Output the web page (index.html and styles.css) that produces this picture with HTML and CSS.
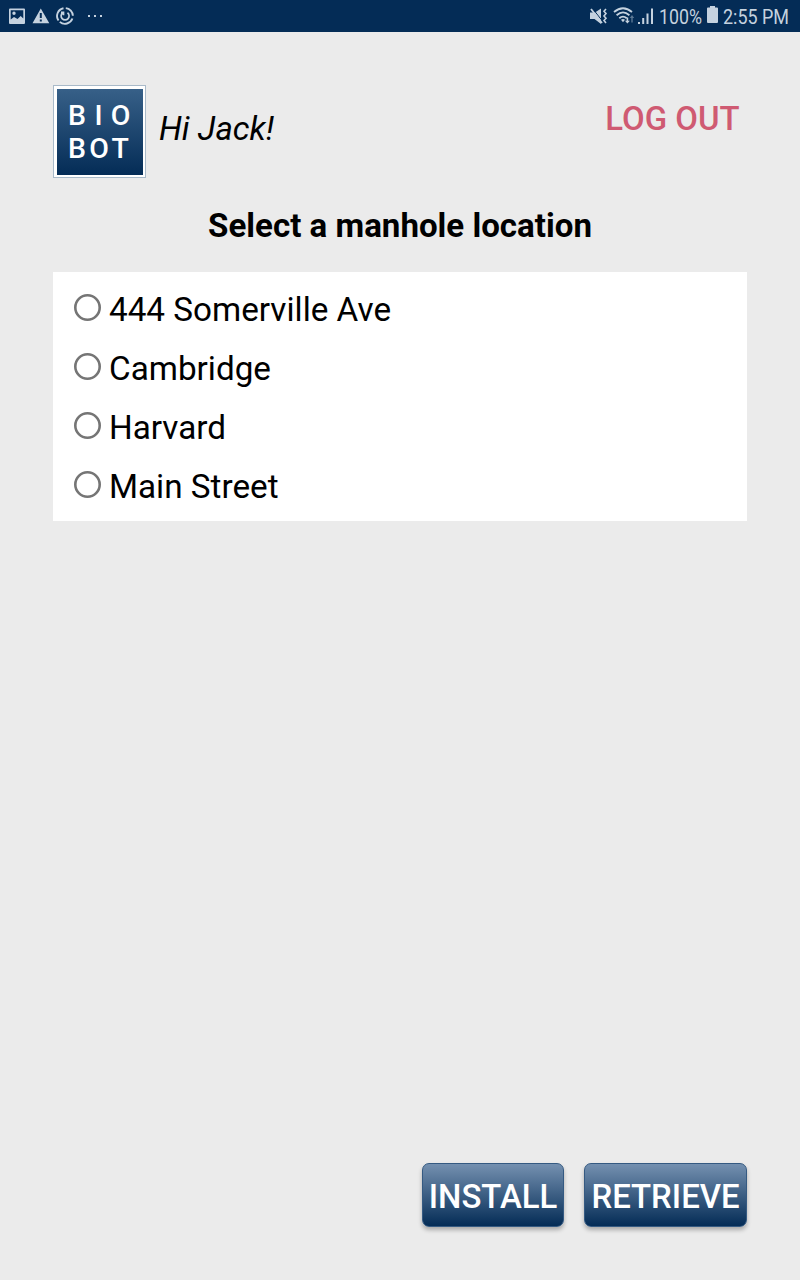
FILE: index.html
```html
<!DOCTYPE html>
<html lang="en">
<head>
<meta charset="utf-8">
<title>Biobot</title>
<link rel="stylesheet" href="styles.css">
</head>
<body>
<div class="screen">
  <div class="status">
    <svg class="status-left" width="120" height="32" viewBox="0 0 120 32">
      <path fill-rule="evenodd" d="M10 8.500h14a1 1 0 0 1 1 1v13.500a1 1 0 0 1-1 1H10a1 1 0 0 1-1-1V9.500a1 1 0 0 1 1-1zM10.700 10.200v9.300l3.300-2.500 3.500 2 3.200-3 2.600 2.500v-8.300zM12.300 13.300a1.700 1.700 0 1 0 3.400 0a1.700 1.700 0 1 0-3.400 0z"/>
      <path fill-rule="evenodd" d="M40.800 8.500L49.300 23.300H32.500zM39.800 13v5h2v-5zM39.800 19.500v2h2v-2z"/>
      <g fill="none" stroke="#c5d2df" stroke-width="1.900">
        <path d="M63.500 8.200A7.900 7.900 0 0 0 58.500 20.500M59.800 21.900A7.900 7.900 0 0 0 72.400 18.500M72.900 15.800A7.900 7.900 0 0 0 65.800 8.100"/>
        <path stroke-width="1.700" d="M62.700 12.700a4 4 0 1 0 4.800 0M61 12.300h2.500v3"/>
      </g>
      <path d="M88 15h2v2h-2zM94 15h2v2h-2zM100 15h2v2h-2z"/>
    </svg>
    <svg class="status-right" width="220" height="32" viewBox="580 0 220 32">
      <path d="M590 12.500h5l6-4v15.500L594.500 19H590z"/>
      <path fill="none" stroke="#042c56" stroke-width="1" d="M593 9L602.500 21.200"/>
      <path fill="none" stroke="#c5d2df" stroke-width="1.800" d="M591 9L602 23"/>
      <path fill="none" stroke="#c5d2df" stroke-width="1.600" d="M606 9l-2 2.300 2 2.300-2 2.400 2 2.300-2 2.300 2 2.400"/>
      <g fill="none" stroke="#c5d2df" stroke-width="1.800">
        <path d="M614 12Q623 4.500 632 12M616.600 15.200Q623 9.600 629.400 15.200M619.300 18.200Q623 15 626.700 18.200"/>
      </g>
      <path d="M621 19.800q2-1.500 4 0l-2 2.400z"/>
      <path d="M626.600 17.500h1.600v3.200h1.700l-2.500 2.900-2.500-2.900h1.700z"/>
      <path opacity=".45" d="M632 15l2.200 3h-1.500v4.500h-1.400V18h-1.500z"/>
      <path d="M638 22h2v2h-2zM642.200 18h2v6h-2zM646.500 13.500h2V24h-2zM651 8.500h2V24h-2z"/>
      <text x="659" y="24" textLength="43" lengthAdjust="spacingAndGlyphs">100%</text>
      <path d="M710 6h5v1.500h2a1 1 0 0 1 1 1V22a1 1 0 0 1-1 1h-9a1 1 0 0 1-1-1V8.500a1 1 0 0 1 1-1h2z"/>
      <text x="723" y="24" textLength="66" lengthAdjust="spacingAndGlyphs">2:55 PM</text>
    </svg>
  </div>
  <header class="header">
    <div class="logo"><div class="logo-face"><span class="bio">BIO</span><span class="bot">BOT</span></div></div>
    <div class="greeting">Hi Jack!</div>
    <div class="logout">LOG OUT</div>
  </header>
  <h1 class="title">Select a manhole location</h1>
  <main class="list">
    <div class="option"><svg class="radio" viewBox="0 0 27 27"><circle cx="13.500" cy="13.500" r="12.200"/></svg><span>444 Somerville Ave</span></div>
    <div class="option"><svg class="radio" viewBox="0 0 27 27"><circle cx="13.500" cy="13.500" r="12.200"/></svg><span>Cambridge</span></div>
    <div class="option"><svg class="radio" viewBox="0 0 27 27"><circle cx="13.500" cy="13.500" r="12.200"/></svg><span>Harvard</span></div>
    <div class="option"><svg class="radio" viewBox="0 0 27 27"><circle cx="13.500" cy="13.500" r="12.200"/></svg><span>Main Street</span></div>
  </main>
  <footer class="actions">
    <div class="button install">INSTALL</div>
    <div class="button retrieve">RETRIEVE</div>
  </footer>
</div>
</body>
</html>
```
FILE: styles.css
```css
* { box-sizing: border-box; }
body { margin: 0; }
.screen {
  width: 800px;
  height: 1280px;
  display: flex;
  flex-direction: column;
  background: #ebebeb;
  color: #000;
  font-family: Roboto, sans-serif;
  font-size: 33.25px;
  line-height: 39px;
  white-space: nowrap;
}
.status {
  height: 32px;
  display: flex;
  justify-content: space-between;
  background: #042c56;
}
.status svg { display: block; fill: #c5d2df; }
.status text { font-size: 20.5px; }
.header {
  display: flex;
  align-items: flex-start;
  height: 146px;
  padding: 53px 60.5px 0 53px;
}
.logo {
  width: 93px;
  height: 93px;
  padding: 2.5px;
  border: 1px solid #a9bac9;
  background: #fff;
}
.logo-face {
  height: 86px;
  padding-top: 10px;
  display: flex;
  flex-direction: column;
  background: linear-gradient(#376088, #042c56);
  color: #fff;
  font-size: 28.5px;
  font-weight: 500;
  line-height: 33px;
}
.bio { padding-left: 11.5px; letter-spacing: 8.4px; }
.bot { padding-left: 11.5px; letter-spacing: 3.3px; }
.greeting { margin: 24px auto 0 13px; font-size: 33px; font-style: italic; }
.logout { margin-top: 14px; color: #cf5a72; font-size: 32.9px; font-weight: 500; }
.title {
  margin: 28px 0 27px;
  font-size: 33.1px;
  line-height: 39px;
  font-weight: 700;
  text-align: center;
}
.list {
  height: 249px;
  margin: 0 53px;
  padding: 8px 21px 0;
  background: #fff;
}
.option { display: flex; align-items: center; height: 59px; gap: 8px; }
.radio {
  width: 27px;
  height: 27px;
  margin-bottom: 4px;
  fill: none;
  stroke: #757575;
  stroke-width: 2.6px;
}
.actions {
  display: flex;
  justify-content: flex-end;
  gap: 20px;
  margin: auto 53px 53px 0;
}
.button {
  height: 64px;
  padding-top: 13px;
  border: 1px solid #355a82;
  border-radius: 7px;
  background: linear-gradient(#7490b0, #042c56);
  box-shadow: 0 3px 4px rgba(0, 0, 0, .28);
  color: #fff;
  font-size: 32.9px;
  font-weight: 500;
  text-align: center;
}
.install { width: 142px; }
.retrieve { width: 163px; }
```
